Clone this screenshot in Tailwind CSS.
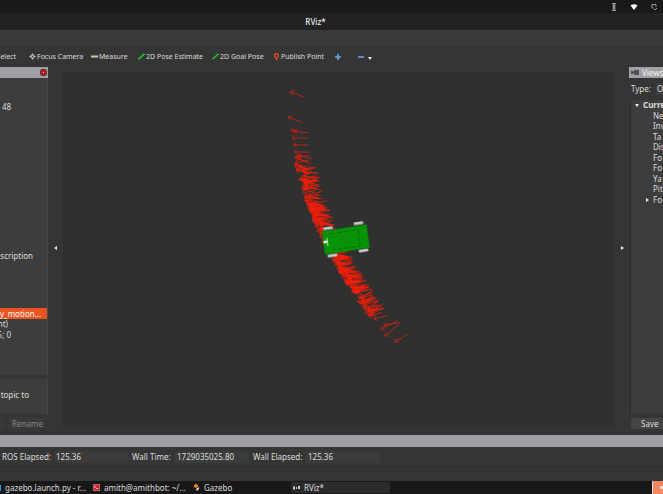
<!DOCTYPE html>
<html lang="en">
<head>
<meta charset="utf-8">
<meta name="viewport" content="width=device-width, initial-scale=1">
<title>RViz*</title>
<script src="https://cdn.jsdelivr.net/npm/@tailwindcss/browser@4"></script>
</head>
<body class="flex h-screen flex-col overflow-hidden bg-[#353535] font-['Noto_Sans','Open_Sans',sans-serif] text-[8px] leading-[10px] whitespace-nowrap text-[#dedede]">

<!-- System bar -->
<header class="flex h-[13px] shrink-0 items-center justify-end gap-3 bg-[#191919] pr-[5px]">
  <svg class="size-2" viewBox="0 0 8 8" fill="none" stroke="#bbb"><path d="M2 .7h4M2 7.3h4M4 1v6M2.5 3h3M2.5 5h3"/></svg>
  <svg class="size-2" viewBox="0 0 8 8" fill="#fff"><path d="M.5 2.5Q4 .2 7.500 2.500L4 7Z"/></svg>
  <svg class="size-2" viewBox="0 0 8 8" fill="none" stroke="#999"><path d="M3.500 5H2V1.500h4V4M4 6l1 1 2-2"/></svg>
</header>
<div class="flex h-[17px] shrink-0 items-center justify-center bg-[#222] pr-8 font-medium text-[#eee]"><h1>RViz*</h1></div>
<div class="h-4 shrink-0 bg-[#3a3a3a]"></div>

<!-- Tools -->
<nav class="flex h-[21px] shrink-0 items-center text-[7px]">
  <button class="flex w-4 justify-end">Select</button>
  <button class="ml-[13px] flex w-[52px] items-center gap-px"><svg class="size-[7px] shrink-0" viewBox="0 0 7 7" fill="none" stroke="#ccc"><circle cx="3.500" cy="3.500" r="1.800"/><path d="M3.500 .5v2M3.500 4.500v2M.5 3.500h2M4.500 3.500h2"/></svg>Focus Camera</button>
  <button class="ml-[10px] flex w-[36px] items-center gap-px"><svg class="h-[3px] w-[7px] shrink-0" viewBox="0 0 7 3"><path fill="#d0c8a0" d="M0 .5h7v2H0z"/></svg>Measure</button>
  <button class="ml-[11px] flex w-[64px] items-center gap-px"><svg class="h-[7px] w-[7px] shrink-0" viewBox="0 0 7 7"><path stroke="#13d52e" stroke-width="1.500" d="M.5 6.300L6.500 .8"/></svg>2D Pose Estimate</button>
  <button class="ml-[10px] flex w-[50px] items-center gap-px"><svg class="h-[7px] w-[7px] shrink-0" viewBox="0 0 7 7"><path stroke="#13d52e" stroke-width="1.500" d="M.5 6.300L6.500 .8"/></svg>2D Goal Pose</button>
  <button class="ml-[12px] flex w-[49px] items-center gap-[2px]"><svg class="h-[7px] w-[5px] shrink-0" viewBox="0 0 5 7" fill="none" stroke="#d14b2b" stroke-width="1.500"><path d="M2.500 6.500L.8 3.300Q.3.700 2.500.700T4.200 3.300Z"/></svg>Publish Point</button>
  <button class="ml-[12px]" aria-label="Add tool"><svg class="size-[6px]" viewBox="0 0 6 6" stroke="#6fa8e8" stroke-width="1.600"><path d="M3 0v6M0 3h6"/></svg></button>
  <button class="ml-[17px] flex items-center gap-1" aria-label="Remove tool"><svg class="h-[6px] w-[6px]" viewBox="0 0 6 6"><path stroke="#6fa8e8" stroke-width="1.600" d="M0 3h6"/></svg><svg class="mt-[3px] h-[3px] w-1" viewBox="0 0 4 3"><path fill="#eee" d="M0 0h4L2 3z"/></svg></button>
</nav>

<main class="flex min-h-0 flex-1 pb-[6px]">
  <!-- Displays panel -->
  <aside class="flex w-12 shrink-0 flex-col overflow-hidden">
    <div class="flex h-[11px] items-center justify-end bg-[#a09fa4] pr-[2px]">
      <button class="flex size-[5px] items-center justify-center rounded-[1px] bg-[#c5161c] outline outline-[#593538]" aria-label="Close displays"><span class="size-px bg-[#eec]"></span></button>
    </div>
    <div class="min-h-0 flex-1 border-r border-[#484848] bg-[#3d3d3d] pt-6">
      <div class="pl-[2px]">48</div>
      <div class="mt-[139px] flex w-[33px] justify-end">escription</div>
      <div class="mt-[47px] flex h-[11px] items-center bg-[#e95420] text-white"><span>y_motion...</span></div>
      <div class="flex w-2 justify-end">nt)</div>
      <div class="mt-px flex w-[11px] justify-end">5; 0</div>
    </div>
    <div class="mt-1 flex h-[35px] items-center border-r border-[#484848] bg-[#3d3d3d] pr-1 pb-1"><span class="flex w-[29px] justify-end">topic to</span></div>
    <div class="mt-1 flex justify-between pr-[2px] text-[#858585]">
      <span class="w-1 bg-[#393939]"></span>
      <button class="h-[11px] w-[37px] bg-[#393939]">Rename</button>
    </div>
  </aside>
  <button class="flex w-[15px] shrink-0 items-center justify-center pr-px" aria-label="Collapse left panel"><svg class="h-1 w-[3px]" viewBox="0 0 3 4"><path fill="#eee" d="M3 0v4L0 2z"/></svg></button>

  <!-- 3D view -->
  <section class="mt-[5px] mb-[2px] min-w-0 flex-1 overflow-hidden bg-[#303030]">
    <svg class="h-full w-full" viewBox="63 72 551 355" role="img" aria-label="Robot with pose arrows">
      <g id="arrows" fill="none" stroke="#fa1d08" stroke-width=".65"></g>
      <g stroke="#888" stroke-width="3.400" stroke-linecap="round">
        <path d="M324.500 229l7-1M355 224l7-1M329 256l7-1M360 251l7-1"/>
      </g>
      <g stroke="#c8c8c8" stroke-width="1.800" stroke-linecap="round">
        <path d="M324.500 228.500l7-1M355 223.500l7-1M329 256l7-1M360 251l7-1"/>
      </g>
      <path fill="#079307" stroke="#087308" stroke-width=".6" d="M322 231.500L366.500 224.500L369.500 247.500L325 254.500Z"/>
      <path fill="none" stroke="#056005" stroke-width=".8" stroke-dasharray="5 2" d="M330 234L358 229.500L360 246L333 250"/>
      <path fill="none" stroke="#b5d5b0" stroke-width="1.100" d="M327 238l1 8M325 242l3-.5"/>
      <path fill="#fff" d="M323.500 241l3-.5 .5 2.500-3 .5z"/>
      <path fill="#8b5a08" d="M345.500 239h1.500v1.500h-1.500z"/>
    </svg>
  </section>
  <button class="flex w-[15px] shrink-0 items-center justify-center pl-[2px]" aria-label="Collapse right panel"><svg class="h-1 w-[3px]" viewBox="0 0 3 4"><path fill="#eee" d="M0 0v4L3 2z"/></svg></button>

  <!-- Views panel -->
  <aside class="flex w-[34px] shrink-0 flex-col overflow-hidden">
    <div class="flex h-[11px] shrink-0 items-center gap-[3px] bg-[#a09fa4] pl-[2px] text-[#f4f4f4]"><svg class="h-[5px] w-[8px] shrink-0" viewBox="0 0 8 5" fill="#505055"><path d="M0 .5l3 1V0h5v5H3V3.500l-3 1z"/></svg><h2>Views</h2></div>
    <div class="flex h-[22px] shrink-0 items-center gap-[5px] pl-[2px]"><label for="view-type">Type:</label><select id="view-type" class="h-3 w-24 shrink-0 appearance-none bg-[#3d3d3d] pl-px"><option>Orbit (rviz)</option></select></div>
    <ul class="ml-px min-h-0 flex-1 border-l border-[#2b2b2b] bg-[#3d3d3d]">
      <li class="flex h-[105px] flex-col text-[8px]">
        <div class="flex flex-1 items-center gap-1 pl-1 font-bold"><svg class="h-[3px] w-1 shrink-0" viewBox="0 0 4 3"><path fill="#eee" d="M0 0h4L2 3z"/></svg>Curre</div>
        <div class="flex flex-1 items-center pl-[22px]">Ne</div>
        <div class="flex flex-1 items-center pl-[22px]">Inv</div>
        <div class="flex flex-1 items-center pl-[22px]">Ta</div>
        <div class="flex flex-1 items-center pl-[22px]">Dis</div>
        <div class="flex flex-1 items-center pl-[22px]">Fo</div>
        <div class="flex flex-1 items-center pl-[22px]">Fo</div>
        <div class="flex flex-1 items-center pl-[22px]">Ya</div>
        <div class="flex flex-1 items-center pl-[22px]">Pit</div>
        <div class="flex flex-1 items-center gap-1 pl-[15px]"><svg class="h-1 w-[3px] shrink-0" viewBox="0 0 3 4"><path fill="#eee" d="M0 0v4L3 2z"/></svg>Fo</div>
      </li>
    </ul>
    <button class="mt-1 ml-[2px] h-[11px] shrink-0 bg-[#444] pl-[10px] text-left">Save</button>
  </aside>
</main>

<!-- Time panel -->
<div class="h-3 shrink-0 bg-[#a09fa4]"></div>
<form class="flex h-5 shrink-0 items-center border-b border-[#2d2d2d] pl-[2px]">
  <label for="ros-elapsed" class="w-[53px]">ROS Elapsed:</label>
  <input id="ros-elapsed" class="h-3 w-[73px] bg-[#3b3b3b] px-px" value="125.36" readonly>
  <label for="wall-time" class="ml-1 w-[43px]">Wall Time:</label>
  <input id="wall-time" class="h-3 w-[74px] bg-[#3b3b3b] px-[2px]" value="1729035025.80" readonly>
  <label for="wall-elapsed" class="ml-1 w-[53px]">Wall Elapsed:</label>
  <input id="wall-elapsed" class="h-3 w-[74px] bg-[#3b3b3b] px-[2px]" value="125.36" readonly>
</form>
<div class="h-[14px] shrink-0"></div>

<!-- Taskbar -->
<footer class="flex h-[13px] shrink-0 items-center bg-[#181818]">
  <span class="h-[6px] w-px bg-[#2b9bdc]"></span>
  <button class="ml-1 w-[88px] text-left">gazebo.launch.py - r...</button>
  <button class="flex w-[101px] items-center gap-1"><svg class="size-[7px] shrink-0" viewBox="0 0 7 7"><path fill="#df2029" stroke="#bbb" stroke-width=".6" d="M.3.3h6.400v6.400H.3z"/><path fill="none" stroke="#fff" stroke-width=".7" d="M1.500 2l1 1-1 1M3 4.500h2"/></svg>amith@amithbot: ~/...</button>
  <button class="flex w-[97px] items-center gap-[5px]"><svg class="h-[7px] w-[5px] shrink-0" viewBox="0 0 5 7"><path fill="#f58113" d="M0 1l2-1 2 1v2L2 4 0 3z"/><path fill="#ddd" d="M2 5l3-2v2L3 7z"/></svg>Gazebo</button>
  <button class="flex h-[11px] w-[99px] items-center gap-1 bg-[#2b2b2b] pl-[2px]"><svg class="h-1 w-[7px] shrink-0" viewBox="0 0 7 4"><path fill="#ccc" d="M0 1l2-1v4L0 3zM3 1h1v2H3zM5 0h2v3H5z"/></svg>RViz*</button>
  <button class="ml-auto flex h-full w-[11px] items-center justify-end border-l border-[#ddd] bg-[#f08763]" aria-label="Show desktop"><span class="size-[3px] bg-[#f8d5c8]"></span></button>
</footer>

<script>
  // Arrow tips follow this spine: x, y, tail slope in degrees
  const spine = [[297,157,8],[299,168,5],[302,178,0],[305,188,0],[309,202,0],[314,214,0],[319,228,0],[325,242,0],[334,256,0],[341,270,-5],[348,282,-12],[355,293,-20],[363,305,-25],[371,318,-23]];
  let seed = 17;
  const rand = () => (seed = (seed * 16807) % 2147483647) / 2147483647;
  const arrow = (x, y, deg, len = 15) => {
    const at = (a, r) => `${(x + Math.cos(a) * r).toFixed(1)} ${(y + Math.sin(a) * r).toFixed(1)}`;
    const a = deg * Math.PI / 180;
    return `M${at(a, len)}L${x} ${y}M${at(a - .7, 4)}L${x} ${y}L${at(a + .7, 4)}`;
  };
  let d = arrow(290.5,92,20) + arrow(288.5,117,22) + arrow(291,130,10,7) + arrow(294,131.5,5,14) + arrow(292,138,0) + arrow(293.500,145,0) + arrow(294,152,0) + arrow(298,155,15)
    + arrow(381,329,-26,18) + arrow(384,325,-8,16) + arrow(385,336,-40,18) + arrow(395,342,-32) + arrow(374,319,-15,15) + arrow(368,315,-35,18);
  for (let i = 0; i < spine.length - 1; i++) {
    const [x0, y0, a0] = spine[i], [x1, y1, a1] = spine[i + 1];
    const n = i < 2 ? 8 : i < 4 ? 14 : i > 10 ? 12 : 24;
    for (let k = 0; k < n; k++) {
      const t = rand();
      d += arrow(x0 + (x1 - x0) * t + rand() * 8 - 4, y0 + (y1 - y0) * t, a0 + (a1 - a0) * t + (rand() - .5) * 40, 14);
    }
  }
  const path = document.createElementNS('http://www.w3.org/2000/svg', 'path');
  path.setAttribute('d', d);
  document.getElementById('arrows').append(path);
</script>
</body>
</html>
